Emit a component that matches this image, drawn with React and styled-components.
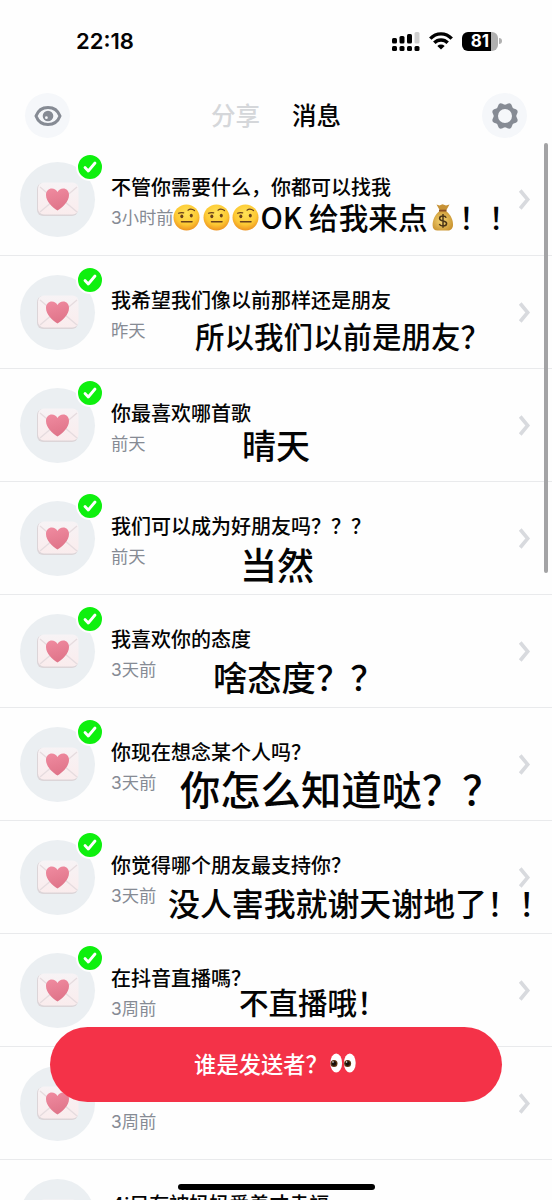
import React from 'react';
import styled, { createGlobalStyle } from 'styled-components';

const GlobalStyle = createGlobalStyle`
  * { box-sizing: border-box; }
  html, body { margin: 0; background: #fefefe; }
  body { font-family: Inter, "Noto Sans CJK SC", sans-serif; color: #040404; overflow: hidden; }
`;

const Screen = styled.main`
  position: relative;
  width: 552px;
  height: 1200px;
  overflow: hidden;
  display: flex;
  flex-direction: column;
  background: #fefefe;
`;

const StatusBar = styled.div`
  height: 82px;
  flex: none;
  display: flex;
  align-items: center;
  justify-content: space-between;
  padding: 0 50px 0 76px;
`;

const Clock = styled.time`
  font: 600 22px/26px Inter, sans-serif;
`;

const StatusIcons = styled.div`
  display: flex;
  align-items: center;
  gap: 9px;
`;

const Battery = styled.div`
  position: relative;
  width: 36px;
  height: 19px;
  border-radius: 6px;
  background: linear-gradient(90deg, #000 29px, #b0b0b0 29px);
  color: #fff;
  font: 700 17px/19px Inter, sans-serif;
  text-align: center;
  margin-right: 4px;
  &::after {
    content: "";
    position: absolute;
    right: -4px;
    top: 6px;
    width: 3px;
    height: 6px;
    border-radius: 0 3px 3px 0;
    background: #b0b0b0;
  }
`;

const Header = styled.header`
  height: 61px;
  flex: none;
  display: flex;
  align-items: center;
  justify-content: space-between;
  padding: 6px 25px 0;
`;

const RoundButton = styled.button`
  width: 45px;
  height: 45px;
  padding: 0;
  border: 0;
  border-radius: 50%;
  background: #f5f7fa;
  color: #868b94;
  display: grid;
  place-items: center;
`;

const Tabs = styled.nav`
  display: flex;
  gap: 32px;
`;

const Tab = styled.span`
  font-size: 24.5px;
  line-height: 36px;
  font-weight: 500;
  color: ${(p) => (p.$active ? '#040404' : '#d5d7da')};
`;

const List = styled.div`
  flex: none;
  display: flex;
  flex-direction: column;
`;

const Row = styled.article`
  position: relative;
  height: 113px;
  flex: none;
  display: flex;
  align-items: center;
  padding: 1px 21px 0 20px;
  border-bottom: 1px solid #e9eaec;
`;

const Avatar = styled.div`
  position: relative;
  width: 75px;
  height: 75px;
  flex: none;
  border-radius: 50%;
  background: #ebeff2;
  display: grid;
  place-items: center;
  padding-bottom: 2px;
`;

const Badge = styled.span`
  position: absolute;
  left: 56px;
  top: -9px;
  width: 28px;
  height: 28px;
  border-radius: 50%;
  border: 2px solid #fefefe;
  background: #0ef00e;
  display: grid;
  place-items: center;
`;

const Body = styled.div`
  flex: 1;
  min-width: 0;
  padding: 7px 0 0 16px;
  display: flex;
  flex-direction: column;
`;

const Title = styled.h2`
  margin: 0;
  font-size: 20px;
  line-height: 30px;
  height: 30px;
  font-weight: 500;
  white-space: nowrap;
`;

const Time = styled.span`
  font-size: 17.3px;
  line-height: 26px;
  height: 31px;
  padding-top: 2px;
  color: #868b94;
  white-space: nowrap;
`;

const Reply = styled.p`
  position: absolute;
  left: ${(p) => p.$x}px;
  top: ${(p) => p.$y}px;
  margin: 0;
  display: flex;
  align-items: center;
  font-family: "Noto Sans CJK SC", sans-serif;
  font-size: ${(p) => p.$size}px;
  line-height: 40px;
  font-weight: 500;
  white-space: pre;
  z-index: 1;
`;

const ScrollThumb = styled.div`
  position: absolute;
  right: 4px;
  top: 143px;
  width: 4px;
  height: 430px;
  border-radius: 2px;
  background: #a3a3a5;
`;

const SenderButton = styled.button`
  position: absolute;
  left: 50px;
  top: 1027px;
  width: 452px;
  height: 75px;
  border: 0;
  border-radius: 38px;
  background: #f43248;
  color: #fff;
  display: flex;
  align-items: center;
  justify-content: center;
  gap: 2px;
  padding: 0 2px 3px 0;
  font: 500 22.3px/32px "Noto Sans CJK SC", sans-serif;
  z-index: 2;
`;

const HomeBar = styled.div`
  position: absolute;
  left: 178px;
  top: 1184px;
  width: 197px;
  height: 6px;
  border-radius: 3px;
  background: #000;
  z-index: 3;
`;

const Signal = () => (
  <svg width="28" height="19" viewBox="0 0 28 19">
    <rect x="0" y="6" width="5" height="5.5" rx="1.5" />
    <rect x="7.5" y="4" width="5" height="7.5" rx="1.5" />
    <rect x="15" y="2" width="5" height="9.5" rx="1.5" />
    <rect x="22.5" y="0" width="5" height="11.5" rx="1.5" fill="#cfcfcf" />
    {[0, 7.5, 15, 22.5].map((x) => <rect key={x} x={x} y="14" width="5" height="5" rx="1.5" />)}
  </svg>
);

const Wifi = () => (
  <svg width="24" height="18" viewBox="0 0 24 18" fill="none" stroke="#000" strokeWidth="3.4">
    <path d="M1.3 6.7C7.3.3 16.7.3 22.7 6.7" />
    <path d="M5.3 10.8C9 7 15 7 18.7 10.8" />
    <path d="M8.3 13.9 12 17.6l3.7-3.7c-2.2-1.8-5.2-1.8-7.4 0z" fill="#000" stroke="none" />
  </svg>
);

const Eye = () => (
  <svg width="28" height="22" viewBox="0 0 28 22">
    <path d="M2 11C4 5.6 8.5 2.5 14 2.5S24 5.6 26 11C24 16.4 19.5 19.5 14 19.5S4 16.4 2 11z" fill="none" stroke="currentColor" strokeWidth="3" strokeLinejoin="round" />
    <circle cx="14" cy="11" r="5.3" fill="currentColor" />
    <circle cx="12.4" cy="12.7" r="1.4" fill="#f5f7fa" />
  </svg>
);

const gearPath = (() => {
  const pts = [];
  for (let i = 0; i < 96; i += 1) {
    const a = (i / 96) * Math.PI * 2;
    const r = 12.4 + 1.1 * Math.cos(8 * (a - Math.PI / 8));
    pts.push(`${(14 + r * Math.cos(a)).toFixed(2)} ${(14 + r * Math.sin(a)).toFixed(2)}`);
  }
  return `M${pts.join('L')}Z M21 14a7 7 0 1 0-14 0a7 7 0 1 0 14 0Z`;
})();

const Gear = () => (
  <svg width="28" height="28" viewBox="0 0 28 28"><path d={gearPath} fill="currentColor" fillRule="evenodd" /></svg>
);

const Letter = () => (
  <svg width="44" height="36" viewBox="0 0 44 36">
    <defs>
      <linearGradient id="paper" x1="0" y1="0" x2="0" y2="1">
        <stop offset="0" stopColor="#f7f3f5" />
        <stop offset="1" stopColor="#faeced" />
      </linearGradient>
      <linearGradient id="heart" x1="0" y1="0" x2=".3" y2="1">
        <stop offset="0" stopColor="#f08ba0" />
        <stop offset="1" stopColor="#e0758a" />
      </linearGradient>
    </defs>
    <rect x="1" y="2" width="41" height="33" rx="6" fill="#dcd5d8" />
    <rect x="2" y="1.5" width="40.5" height="32" rx="6" fill="url(#paper)" />
    <path d="M4 31l13-11M41 31L28 20M4 6l13 11M41 6L28 17" fill="none" stroke="#e6dcdf" strokeWidth="1.3" />
    <path d="M21.5 29.500C16.5 26.500 10 20.500 10 14C10 10 12.700 7.500 15.800 7.500c2.500 0 4.500 1.300 5.700 3.500C22.700 8.800 24.700 7.500 27.200 7.500c3.300 0 5.800 2.500 5.800 6.500C33 20.500 26.500 26.500 21.500 29.500z" fill="url(#heart)" />
  </svg>
);

const Check = () => (
  <svg width="14" height="12" viewBox="0 0 14 12" fill="none" stroke="#fff" strokeWidth="2.8" strokeLinecap="round" strokeLinejoin="round">
    <path d="M2 6.500l3.300 3.500L12 2" />
  </svg>
);

const ChevronSvg = styled.svg`
  flex: none;
`;
const Chevron = () => (
  <ChevronSvg width="13" height="22" viewBox="0 0 13 22" fill="none" stroke="#d8dade" strokeWidth="3.6">
    <path d="M2.200 1.500l7.500 9-7.500 9" />
  </ChevronSvg>
);

const EmojiSvg = styled.svg`
  flex: none;
  margin: 0 ${(p) => p.$gap || 0}px;
`;

const Brow = () => (
  <EmojiSvg width="27" height="27" viewBox="0 0 27 27" $gap={1.25}>
    <defs>
      <radialGradient id="face" cx=".5" cy=".35" r=".65">
        <stop offset="0" stopColor="#ffe256" />
        <stop offset=".65" stopColor="#fdc934" />
        <stop offset="1" stopColor="#ee9420" />
      </radialGradient>
    </defs>
    <circle cx="13.5" cy="13.5" r="13" fill="url(#face)" />
    <g fill="none" stroke="#68401b" strokeLinecap="round">
      <path d="M5.500 9.200q2.500-1.100 5.200-.4M15 6.200q3-2.200 6.500.4" strokeWidth="1.2" />
      <path d="M8.500 17.800h10.500" strokeWidth="1.5" />
    </g>
    <ellipse cx="8.8" cy="12.3" rx="1.5" ry="1.9" fill="#68401b" />
    <ellipse cx="18.3" cy="11.6" rx="1.5" ry="1.9" fill="#68401b" />
  </EmojiSvg>
);

const MoneyBag = () => (
  <EmojiSvg width="22" height="28" viewBox="0 0 22 28" $gap={4.8}>
    <defs>
      <radialGradient id="bag" cx=".45" cy=".5" r=".6">
        <stop offset="0" stopColor="#f6d776" />
        <stop offset="1" stopColor="#c8922f" />
      </radialGradient>
    </defs>
    <path d="M4.500 1.500l3 1 3-1.300 3.500 1.300 3.500-1-3.500 6.200h-6z" fill="#c79235" />
    <path d="M7.500 8h6.500C19 12 21.300 17 21 22c-.2 4-2.500 5.500-5 5.500H5.500C2.500 27.500.7 26 .6 22.500.5 17 3 11.500 7.500 8z" fill="url(#bag)" />
    <path d="M7 7.600h7.500" stroke="#8c4f22" strokeWidth="1.8" />
    <path d="M14.200 14.700c-.5-1.200-1.700-1.700-3.300-1.700-2 0-3.300.9-3.300 2.400 0 3.600 7 1.500 7 5 0 1.500-1.500 2.500-3.600 2.500-1.900 0-3.200-.7-3.700-2M11 11v13.800" fill="none" stroke="#4b3517" strokeWidth="1.5" />
  </EmojiSvg>
);

const Eyes = () => (
  <EmojiSvg width="26" height="20" viewBox="0 0 26 20">
    <ellipse cx="6.2" cy="10" rx="5.9" ry="9.6" fill="#fff" />
    <ellipse cx="19.8" cy="10" rx="5.9" ry="9.6" fill="#fff" />
    <circle cx="4" cy="10.5" r="3.5" fill="#5b3413" />
    <circle cx="17.6" cy="10.5" r="3.5" fill="#5b3413" />
    <circle cx="4" cy="10.5" r="2.2" fill="#17100a" />
    <circle cx="17.6" cy="10.5" r="2.2" fill="#17100a" />
    <circle cx="3" cy="9" r=".8" fill="#fff" />
    <circle cx="16.6" cy="9" r=".8" fill="#fff" />
  </EmojiSvg>
);

const messages = [
  { title: '不管你需要什么，你都可以找我', time: '3小时前', reply: <><Brow /><Brow /><Brow />OK 给我来点<MoneyBag />！！</>, x: 172, y: 54, size: 29.6 },
  { title: '我希望我们像以前那样还是朋友', time: '昨天', reply: '所以我们以前是朋友？', x: 195, y: 59, size: 29.5 },
  { title: '你最喜欢哪首歌', time: '前天', reply: '晴天', x: 242, y: 56, size: 34 },
  { title: '我们可以成为好朋友吗？？？', time: '前天', reply: '当然', x: 240, y: 62, size: 37 },
  { title: '我喜欢你的态度', time: '3天前', reply: '啥态度？？', x: 213, y: 61, size: 34.3 },
  { title: '你现在想念某个人吗？', time: '3天前', reply: '你怎么知道哒？？', x: 180, y: 60, size: 40.3 },
  { title: '你觉得哪个朋友最支持你？', time: '3天前', reply: '没人害我就谢天谢地了！！', x: 168, y: 61, size: 31.9 },
  { title: '在抖音直播嗎？', time: '3周前', reply: '不直播哦！', x: 239, y: 47, size: 29.5 },
  { title: '', time: '3周前' },
  { title: '4i只有被妈妈爱着才幸福', time: '' },
];

export default function App() {
  return (
    <Screen>
      <GlobalStyle />
      <StatusBar>
        <Clock>22:18</Clock>
        <StatusIcons><Signal /><Wifi /><Battery>81</Battery></StatusIcons>
      </StatusBar>
      <Header>
        <RoundButton aria-label="查看"><Eye /></RoundButton>
        <Tabs><Tab>分享</Tab><Tab $active>消息</Tab></Tabs>
        <RoundButton aria-label="设置"><Gear /></RoundButton>
      </Header>
      <List>
        {messages.map((m, i) => (
          <Row key={i}>
            <Avatar><Letter />{i < 8 && <Badge><Check /></Badge>}</Avatar>
            <Body><Title>{m.title}</Title><Time>{m.time}</Time></Body>
            <Chevron />
            {m.reply && <Reply $x={m.x} $y={m.y} $size={m.size}>{m.reply}</Reply>}
          </Row>
        ))}
      </List>
      <ScrollThumb />
      <SenderButton>谁是发送者？<Eyes /></SenderButton>
      <HomeBar />
    </Screen>
  );
}
